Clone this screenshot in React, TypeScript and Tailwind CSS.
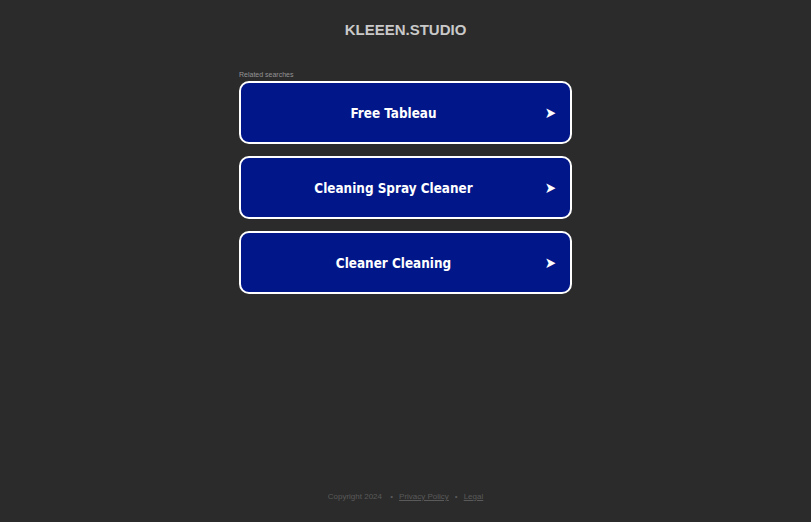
const searches = ['Free Tableau', 'Cleaning Spray Cleaner', 'Cleaner Cleaning']

export default function App() {
  return (
    <div className="flex min-h-[522px] flex-col bg-[#2b2b2b] font-['Liberation_Sans',Arial,sans-serif]">
      <header className="pt-[21px] text-center">
        <h1 className="text-[15px] font-bold leading-[18px] text-[#c9c9c9]">KLEEEN.STUDIO</h1>
      </header>

      <main className="mx-auto mt-[32px] w-[333px]">
        <p className="mb-[2px] text-[7px] leading-[8px] text-[#949494]">Related searches</p>
        <div className="flex flex-col gap-[12px]">
          {searches.map((s) => (
            <a
              key={s}
              href="#"
              className="relative flex h-[63px] items-center justify-center rounded-[10px] border-2 border-white bg-[#011689] pl-[14px] pr-[38px] pt-[3px] font-['DejaVu_Sans_Condensed','DejaVu_Sans',Verdana,sans-serif] text-[13.4px] font-bold leading-[18px] text-white"
            >
              {s}
              <span className="absolute right-[14px] top-1/2 -translate-y-1/2 text-[15px] leading-none">➤</span>
            </a>
          ))}
        </div>
      </main>

      <footer className="mt-auto pb-[19px] text-center text-[8px] text-[#5a5a5a]">
        Copyright 2024 <span className="mx-[6px]">•</span>
        <a href="#" className="underline">Privacy Policy</a>
        <span className="mx-[6px]">•</span>
        <a href="#" className="underline">Legal</a>
      </footer>
    </div>
  )
}
